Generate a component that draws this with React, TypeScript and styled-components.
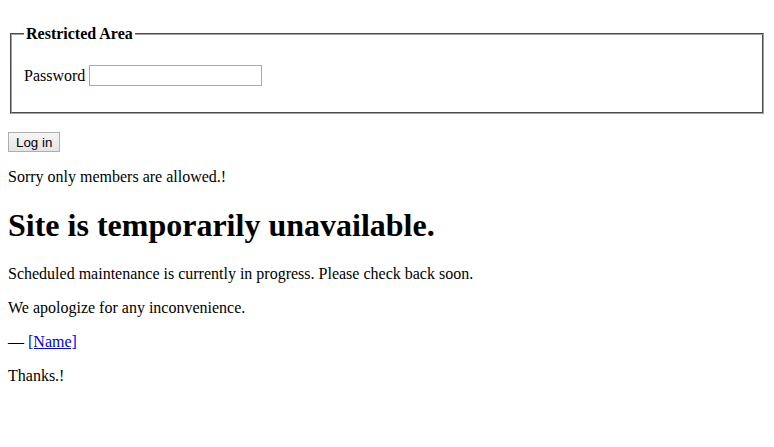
import styled, { createGlobalStyle } from 'styled-components';

const GlobalStyle = createGlobalStyle`
  html, body {
    margin: 0;
    padding: 0;
    background: #ffffff;
  }
  body {
    font-family: "Liberation Serif", "Times New Roman", serif;
    font-size: 16px;
    color: #000000;
  }
`;

const Page = styled.div`
  padding: 8px;
`;

const LoginForm = styled.form`
  margin: 17px 0 0;
`;

const Fieldset = styled.fieldset`
  margin: 0 2px;
  padding: 6px 12px 10px;
  border: 2px groove #a0a0a0;
`;

const Legend = styled.legend`
  padding: 0 2px;
  font-weight: bold;
  font-size: 16px;
`;

const Field = styled.p`
  margin: 16px 0;
  line-height: 21px;
`;

const PasswordInput = styled.input`
  width: 169px;
  height: 17px;
  padding: 1px;
  margin: 0;
  border: 1px solid #a9a9a9;
  font-family: "Liberation Sans", Arial, sans-serif;
  font-size: 13.33px;
  vertical-align: bottom;
`;

const ButtonRow = styled.div`
  margin: 18px 0 0;
`;

const SubmitButton = styled.button`
  font-family: "Liberation Sans", Arial, sans-serif;
  font-size: 13.33px;
  height: 20px;
  padding: 0 7px;
  color: #000000;
  border: 1px solid #adadad;
  border-radius: 0;
  background: linear-gradient(#f6f6f6, #e4e4e4);
`;

const Text = styled.p`
  margin: 16px 0;
  line-height: 18px;
`;

const Heading = styled.h1`
  font-size: 32px;
  font-weight: bold;
  margin: 21px 0;
  line-height: 37px;
`;

const NameLink = styled.a`
  color: #0000ee;
  text-decoration: underline;
`;

export default function App() {
  return (
    <>
      <GlobalStyle />
      <Page>
        <LoginForm onSubmit={(e) => e.preventDefault()}>
          <Fieldset>
            <Legend>Restricted Area</Legend>
            <Field>
              Password <PasswordInput type="password" />
            </Field>
          </Fieldset>
          <ButtonRow>
            <SubmitButton type="submit">Log in</SubmitButton>
          </ButtonRow>
        </LoginForm>
        <Text>Sorry only members are allowed.!</Text>
        <Heading>Site is temporarily unavailable.</Heading>
        <Text>Scheduled maintenance is currently in progress. Please check back soon.</Text>
        <Text>We apologize for any inconvenience.</Text>
        <Text>
          — <NameLink href="#">[Name]</NameLink>
        </Text>
        <Text>Thanks.!</Text>
      </Page>
    </>
  );
}
